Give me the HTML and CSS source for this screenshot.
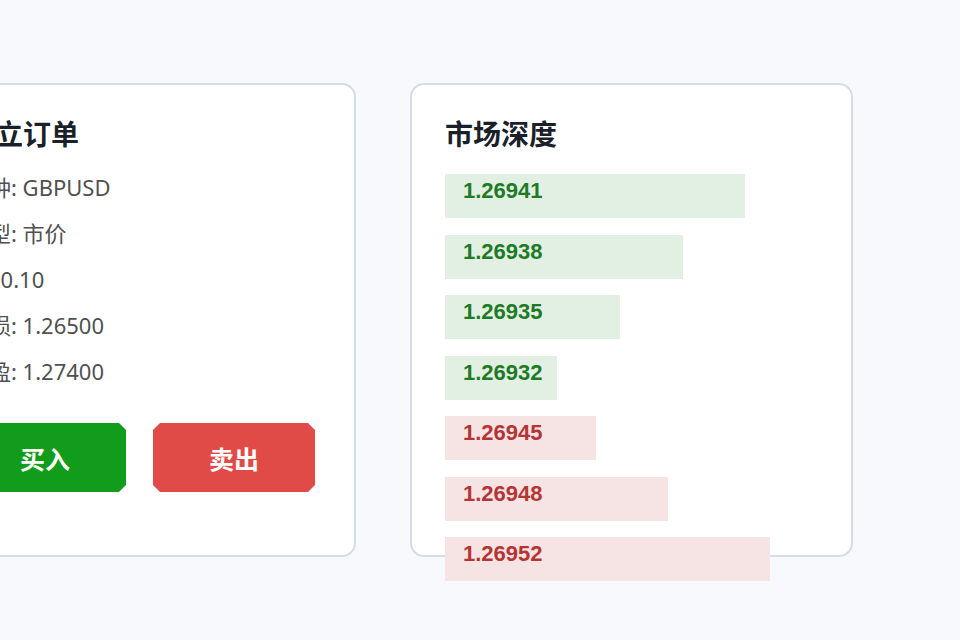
FILE: index.html
```html
<html lang="zh-CN">
<head>
	<meta charset="UTF-8">
	<title>交易面板</title>
	<link rel="stylesheet" href="styles.css">
</head>
<body>

	<div class="panels">
		<div class="card order">
			<h2 class="card-title">建立订单</h2>
			<div class="order-info">
				<div class="order-row">品种: GBPUSD</div>
				<div class="order-row">类型: 市价</div>
				<div class="order-row">量: 0.10</div>
				<div class="order-row">止损: 1.26500</div>
				<div class="order-row">止盈: 1.27400</div>
			</div>
			<div class="order-btns">
				<button class="btn btn-buy">买入</button>
				<button class="btn btn-sell">卖出</button>
			</div>
		</div>

		<div class="card depth">
			<h2 class="card-title">市场深度</h2>
			<div class="depth-list">
				<div class="depth-bar bid" style="width: 300px">1.26941</div>
				<div class="depth-bar bid" style="width: 238px">1.26938</div>
				<div class="depth-bar bid" style="width: 175px">1.26935</div>
				<div class="depth-bar bid" style="width: 112px">1.26932</div>
				<div class="depth-bar ask" style="width: 151px">1.26945</div>
				<div class="depth-bar ask" style="width: 223px">1.26948</div>
				<div class="depth-bar ask" style="width: 325px">1.26952</div>
			</div>
		</div>
	</div>

</body>
</html>
```

FILE: styles.css
```css
body{
	margin: 0;
	background: #f7f9fc;
	font-family: "Noto Sans", "Noto Sans CJK SC", sans-serif;
	overflow: hidden;
}

.panels{
	display: flex;
	gap: 54px;
	padding-top: 83px;
	margin-left: -64px;
}

.card{
	box-sizing: border-box;
	height: 474px;
	background: #fff;
	border: 2px solid #d4dce8;
	border-radius: 14px;
	padding: 30px 35px 0 29px;
}

.order{
	width: 420px;
}

.depth{
	width: 443px;
	padding-left: 33px;
}

.card-title{
	margin: 0;
	font-family: "Noto Sans CJK SC", sans-serif;
	font-size: 28px;
	font-weight: 700;
	line-height: 36px;
	color: #1b1f2a;
}

.order-info{
	margin-top: 13px;
}

.order-row{
	font-size: 22px;
	line-height: 46px;
	color: #505050;
}

.order-btns{
	display: flex;
	justify-content: flex-end;
	gap: 27px;
	margin: 29px 4px 0 0;
}

.btn{
	flex-shrink: 0;
	width: 162px;
	height: 69px;
	border: none;
	color: #fff;
	font-family: "Noto Sans CJK SC", sans-serif;
	font-size: 25px;
	font-weight: 700;
	clip-path: polygon(7px 0, calc(100% - 7px) 0, 100% 7px, 100% calc(100% - 7px), calc(100% - 7px) 100%, 7px 100%, 0 calc(100% - 7px), 0 7px);
}

.btn-buy{
	background: #129c1c;
}

.btn-sell{
	background: #e04b48;
}

.depth-list{
	display: flex;
	flex-direction: column;
	align-items: flex-start;
	gap: 16.5px;
	margin-top: 23px;
}

.depth-bar{
	box-sizing: border-box;
	height: 44px;
	padding: 4px 18px 0;
	font-family: "Liberation Sans", Arial, sans-serif;
	font-size: 22px;
	font-weight: 700;
	line-height: 25px;
}

.bid{
	background: #e2f0e3;
	color: #1f7a26;
}

.ask{
	background: #f6e4e5;
	color: #b53434;
}
```
